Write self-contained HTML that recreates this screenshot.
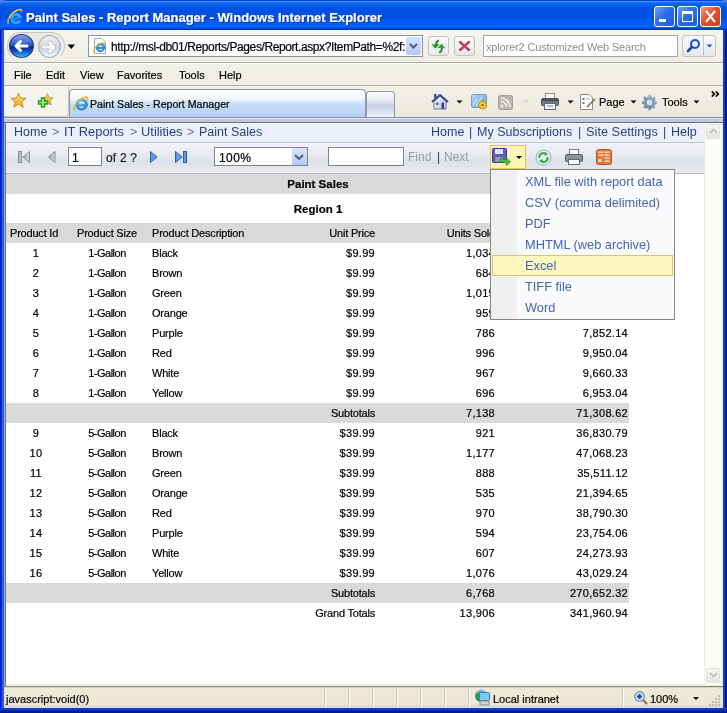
<!DOCTYPE html>
<html><head><meta charset="utf-8">
<style>
*{box-sizing:border-box}
html,body{margin:0;padding:0}
body{width:727px;height:713px;overflow:hidden;position:relative;background:#4a78e0;font-family:"Liberation Sans",sans-serif;font-size:11px;color:#000}
.a{position:absolute}
.t{position:absolute;white-space:nowrap;line-height:1;will-change:transform;-webkit-text-stroke:0.2px currentColor}
#title{left:0;top:0;width:727px;height:30px;background:linear-gradient(to bottom,#0048d0 0,#0048d0 1px,#3a8cff 1px,#3a8cff 2px,#2272f8 2px,#2272f8 3px,#0a62f0 3px,#0a62f0 5px,#0050e2 8px,#004fe4 18px,#005cf6 21px,#0062fc 26px,#0058ec 28px,#0038b8 29px,#0038b8 30px);border-radius:7px 7px 0 0}
.wb{position:absolute;top:6px;width:21px;height:21px;border:1px solid #fff;border-radius:3px;background:linear-gradient(135deg,#6f9ff5 0,#2d6de8 45%,#1f5fe0 100%)}
#client{left:4px;top:30px;width:719px;height:678px;background:#ece9d8}
</style></head>
<body>
<!-- TITLE BAR -->
<div id="title" class="a"></div>
<svg class="a" style="left:5px;top:7px" width="18" height="18" viewBox="0 0 18 18">
  <g transform="rotate(-15 11 11.5)">
  <path d="M6.6 11.3H15.4A4.4 4.2 0 1 0 14.2 14.5" stroke="#38a8f0" stroke-width="2.6" fill="none"/>
  <path d="M6.8 11.3H15" stroke="#1868c8" stroke-width="1.2"/>
  </g>
  <path d="M3.5 16.8C1.8 14 5 6.5 12 3.3C15.6 1.8 17 2.5 16.2 4.6" stroke="#e8c040" stroke-width="1.7" fill="none"/>
  <path d="M3.5 16.8C2.5 15.5 3 13 4.2 11" stroke="#c08038" stroke-width="1.2" fill="none"/>
</svg>
<div class="t" style="left:26px;top:11px;font-size:13px;font-weight:bold;color:#0a1e6a;opacity:.6;transform:translate(1px,1px)">Paint Sales - Report Manager - Windows Internet Explorer</div>
<div class="t" style="left:26px;top:11px;font-size:13px;font-weight:bold;color:#fff">Paint Sales - Report Manager - Windows Internet Explorer</div>
<div class="wb" style="left:654px"><div class="a" style="left:4px;top:12px;width:7px;height:3px;background:#fff"></div></div>
<div class="wb" style="left:677px"><div class="a" style="left:4px;top:4px;width:11px;height:11px;border:1px solid #fff;border-top-width:3px"></div></div>
<div class="wb" style="left:700px;background:linear-gradient(135deg,#f09a7a 0,#e0542e 45%,#c8401c 100%)">
  <svg class="a" style="left:4px;top:3px" width="11" height="13" viewBox="0 0 11 13"><path d="M1 1L10 12M10 1L1 12" stroke="#fff" stroke-width="2"/></svg>
</div>

<!-- CLIENT -->
<div id="client" class="a"></div>
<!-- NAV BAR -->
<div class="a" style="left:4px;top:30px;width:719px;height:32px;background:linear-gradient(to bottom,#f6f5ee,#efede3)"></div>
<div class="a" style="left:4px;top:62px;width:719px;height:2px;background:linear-gradient(#aeaea6 0,#aeaea6 1px,#fafaf8 1px)"></div>
<!-- back/forward pill -->
<div class="a" style="left:7px;top:32px;width:58px;height:28px;border-radius:14px;border:1px solid #c8c7c0;border-bottom-color:transparent;background:linear-gradient(#e9e8e2,#f3f2ec)"></div>
<div class="a" style="left:9px;top:34px;width:25px;height:24px;border-radius:50%;background:linear-gradient(#7aa0ea 0%,#4d74d4 30%,#2a4cb0 48%,#0a2c98 55%,#0c4ab8 70%,#1c90ea 90%,#48c0fa 100%);border:1px solid #1e3a8a"></div>
<svg class="a" style="left:12px;top:37px" width="18" height="18" viewBox="0 0 18 18"><path d="M8.5 4.5L4 9L8.5 13.5M4.5 9H15" stroke="#fff" stroke-width="3" fill="none" stroke-linecap="round" stroke-linejoin="round"/></svg>
<div class="a" style="left:38px;top:35px;width:23px;height:23px;border-radius:50%;background:linear-gradient(#f0f0f4 0%,#d8dae2 45%,#c8d2e0 55%,#dcecf8 85%,#eef8fe 100%);border:1px solid #9c9ca6"></div>
<svg class="a" style="left:40px;top:38px" width="18" height="18" viewBox="0 0 18 18"><path d="M9.5 4.5L14 9L9.5 13.5M13.5 9H3" stroke="#b4b4bc" stroke-width="4" fill="none" stroke-linecap="round" stroke-linejoin="round"/><path d="M9.5 4.5L14 9L9.5 13.5M13.5 9H3" stroke="#fafafa" stroke-width="2.8" fill="none" stroke-linecap="round" stroke-linejoin="round"/></svg>
<svg class="a" style="left:67px;top:44px" width="9" height="6" viewBox="0 0 9 6"><path d="M0.5 0.5H8L4.25 5z" fill="#000"/></svg>
<!-- address box -->
<div class="a" style="left:88px;top:35px;width:335px;height:22px;border:1px solid #8e9298;background:#fff"></div>
<svg class="a" style="left:92px;top:38px" width="16" height="16" viewBox="0 0 16 16">
 <path d="M2.5 0.5H10L13.5 4V15.5H2.5Z" fill="#fff" stroke="#a8a8a8"/>
 <path d="M8.5 5A4.6 4.6 0 1 0 13.1 10H11A2.6 2.6 0 0 1 6.2 11H13.1A4.6 4.6 0 0 0 8.5 5Z" fill="#2a88d8"/>
 <path d="M6.3 9A2.2 1.8 0 0 1 10.8 9Z" fill="#d8f0ff"/>
 <path d="M2.2 14.8C1 12.3 3.8 7 9 5.2C12 4.2 13 5 11.8 6.6" stroke="#e0a830" stroke-width="1.2" fill="none"/>
</svg>
<div class="t" style="left:111px;top:41px;font-size:12px;letter-spacing:-0.4px;color:#000;width:294px;height:15px;overflow:hidden">http://msl-db01/Reports/Pages/Report.aspx?ItemPath=%2f:</div>
<div class="a" style="left:406px;top:37px;width:15px;height:18px;background:linear-gradient(#d5e2fb,#b4c8f4);border-radius:2px"></div>
<svg class="a" style="left:409px;top:43px" width="9" height="6" viewBox="0 0 9 6"><path d="M1 1L4.5 4.5L8 1" stroke="#4d6185" stroke-width="2" fill="none"/></svg>
<!-- refresh / stop -->
<div class="a" style="left:428px;top:36px;width:21px;height:20px;border:1px solid #c4c3bb;border-radius:3px;background:linear-gradient(#f8f9fb,#e4e9ef)"></div>
<svg class="a" style="left:430px;top:38px" width="17" height="17" viewBox="0 0 17 17"><path d="M9 2.5C7 3 6 5 6.2 7.5" stroke="#2a8a2a" stroke-width="2.2" fill="none"/><path d="M1.5 6.5L9.5 6.2L5.5 10.5Z" fill="#2a8a2a"/><path d="M9 14.5C11 14 12 12 11.8 9.5" stroke="#3a9a3a" stroke-width="2.2" fill="none"/><path d="M7.5 10L15.5 10.3L11.5 5.8Z" fill="#3a9a3a"/></svg>
<div class="a" style="left:454px;top:36px;width:21px;height:20px;border:1px solid #c4c3bb;border-radius:3px;background:linear-gradient(#f8f9fb,#e4e9ef)"></div>
<svg class="a" style="left:458px;top:40px" width="13" height="12" viewBox="0 0 13 12"><path d="M2 2L11 10M11 2L2 10" stroke="#b8444c" stroke-width="2.4" stroke-linecap="round"/></svg>
<!-- search -->
<div class="a" style="left:483px;top:35px;width:195px;height:22px;border:1px solid #a5a5a5;background:#fff"></div>
<div class="t" style="left:486px;top:42px;font-size:11px;letter-spacing:-0.15px;color:#8d8d8d;-webkit-text-stroke:0">xplorer2 Customized Web Search</div>
<div class="a" style="left:682px;top:35px;width:34px;height:22px;border:1px solid #c4c3bb;border-radius:3px;background:linear-gradient(#f8f9fb,#e4e9ef)"></div>
<div class="a" style="left:703px;top:36px;width:1px;height:20px;background:#c9c7bb"></div>
<svg class="a" style="left:686px;top:38px" width="15" height="15" viewBox="0 0 15 15"><circle cx="9" cy="6" r="4" stroke="#1e4fb8" stroke-width="2" fill="#e8f0ff"/><path d="M6 9L2 13" stroke="#1e3f98" stroke-width="2.5" stroke-linecap="round"/></svg>
<svg class="a" style="left:706px;top:44px" width="7" height="4" viewBox="0 0 7 4"><path d="M0.5 0.5H6.5L3.5 3.5z" fill="#2a4fa8"/></svg>

<!-- MENU BAR -->
<div class="a" style="left:4px;top:64px;width:719px;height:21px;background:linear-gradient(#f2f1ea,#efede4)"></div>
<div class="a" style="left:4px;top:85px;width:719px;height:2px;background:linear-gradient(#aeaea6 0,#aeaea6 1px,#f8f8f4 1px)"></div>
<div class="t" style="left:14px;top:70px;font-size:11px">File</div>
<div class="t" style="left:46px;top:70px;font-size:11px">Edit</div>
<div class="t" style="left:80px;top:70px;font-size:11px">View</div>
<div class="t" style="left:117px;top:70px;font-size:11px">Favorites</div>
<div class="t" style="left:179px;top:70px;font-size:11px">Tools</div>
<div class="t" style="left:219px;top:70px;font-size:11px">Help</div>

<!-- COMMAND / TAB BAR -->
<div class="a" style="left:4px;top:86px;width:719px;height:32px;background:linear-gradient(#f3f1e8,#ebe8da)"></div>
<div class="a" style="left:4px;top:86px;width:65px;height:31px;background:#f4f3ee;border:1px solid #c8c6bc;border-left:none;border-top:none;border-radius:0 0 4px 0"></div>
<svg class="a" style="left:10px;top:92px" width="17" height="17" viewBox="0 0 17 17"><defs><linearGradient id="sg" x1="0" y1="0" x2="0" y2="1"><stop offset="0" stop-color="#ffe27a"/><stop offset="1" stop-color="#f0a018"/></linearGradient></defs><path d="M8.5 1L10.6 6L16 6.3L11.8 9.8L13.2 15.3L8.5 12.2L3.8 15.3L5.2 9.8L1 6.3L6.4 6Z" fill="url(#sg)" stroke="#c08a18" stroke-width="0.9"/></svg>
<svg class="a" style="left:37px;top:92px" width="17" height="17" viewBox="0 0 17 17"><path d="M10.5 1.5L12 5.5L16 5.8L13 8.5L14 13L10.5 10.5L7 13L8 8.5L5 5.8L9 5.5Z" fill="url(#sg)" stroke="#c08a18" stroke-width="0.8"/><path d="M4.5 6H7.5V9H10.5V12H7.5V15H4.5V12H1.5V9H4.5Z" fill="#a8f088" stroke="#2c9a1c" stroke-width="1.4"/></svg>
<!-- tab -->
<div class="a" style="left:69px;top:89px;width:297px;height:28px;border:1px solid #8e99a8;border-bottom:none;border-radius:4px 4px 0 0;background:linear-gradient(#ffffff 0,#f4f8fe 30%,#c6dcf8 55%,#b5cff5 100%)"></div>
<svg class="a" style="left:73px;top:96px" width="16" height="16" viewBox="0 0 16 16">
  <defs><radialGradient id="ieg" cx="0.4" cy="0.3" r="0.8"><stop offset="0" stop-color="#6cc8f8"/><stop offset="1" stop-color="#1a6cc8"/></radialGradient></defs>
  <path d="M8.5 2.5A6 6 0 1 0 14.5 9H12A3.5 3.5 0 0 1 5.5 10.5H14.5A6 6 0 0 0 8.5 2.5Z" fill="url(#ieg)"/>
  <path d="M6 7.8A2.8 2.3 0 0 1 11.8 7.8Z" fill="#d8f0ff"/>
  <path d="M1.6 15C-0.2 11.5 3.5 4.5 10.5 1.6C14.3 0.2 15.8 1.5 13.8 4.6" stroke="#e8b030" stroke-width="1.5" fill="none"/>
</svg>
<div class="t" style="left:90px;top:99px;font-size:10.6px">Paint Sales - Report Manager</div>
<div class="a" style="left:366px;top:91px;width:29px;height:26px;border:1px solid #8e99a8;border-bottom:none;border-radius:4px 4px 0 0;background:linear-gradient(#fbfbfd 0,#eceef6 30%,#c9cde2 55%,#eff0f6 100%)"></div>
<!-- command icons -->
<svg class="a" style="left:431px;top:93px" width="18" height="17" viewBox="0 0 18 17"><defs><linearGradient id="hw" x1="0" y1="0" x2="1" y2="1"><stop offset="0" stop-color="#ffffff"/><stop offset="1" stop-color="#b8c4d8"/></linearGradient></defs><rect x="3" y="1" width="2.5" height="4" fill="#3a52a8"/><path d="M3 8.5V16H15V8.5L9 3Z" fill="url(#hw)" stroke="#6a7a98"/><path d="M1 9L9 2L17 9" stroke="#3048a0" stroke-width="2" fill="none" stroke-linejoin="round"/><rect x="10.5" y="9.5" width="2.5" height="6.5" fill="#2a3f98"/><rect x="5" y="9.5" width="2.5" height="2.5" fill="#5a6a88"/></svg>
<svg class="a" style="left:456px;top:100px" width="7" height="4" viewBox="0 0 7 4"><path d="M0.5 0.5H6.5L3.5 3.5z" fill="#000"/></svg>
<svg class="a" style="left:471px;top:94px" width="17" height="16" viewBox="0 0 17 16"><defs><linearGradient id="fp" x1="0" y1="0" x2="1" y2="1"><stop offset="0" stop-color="#b8dcf8"/><stop offset="1" stop-color="#5aa0e0"/></linearGradient></defs><rect x="0.5" y="0.5" width="15" height="13" rx="1" fill="url(#fp)" stroke="#7a9cc0"/><path d="M2 11L6 5M5 12L11 3" stroke="#e8f4fc" stroke-width="1"/><circle cx="11.5" cy="11" r="4" fill="#f6d020" stroke="#b89010"/><circle cx="11.5" cy="11" r="1.2" fill="#8a6a10"/></svg>
<svg class="a" style="left:498px;top:95px" width="15" height="15" viewBox="0 0 15 15"><rect x="0.5" y="0.5" width="14" height="14" rx="2" fill="#b8b6ae" stroke="#a09e96"/><circle cx="4" cy="11" r="1.5" fill="#f2f2f0"/><path d="M3 6.5A5.5 5.5 0 0 1 8.5 12M3 3A9 9 0 0 1 12 12" stroke="#f2f2f0" stroke-width="1.6" fill="none"/></svg>
<svg class="a" style="left:523px;top:100px" width="7" height="4" viewBox="0 0 7 4"><path d="M0.5 0.5H6.5L3.5 3.5z" fill="#d6d4ca"/></svg>
<svg class="a" style="left:541px;top:93px" width="18" height="17" viewBox="0 0 18 17"><rect x="4.5" y="0.5" width="9" height="6" fill="#fff" stroke="#8a8a8a"/><rect x="0.5" y="5.5" width="17" height="7" rx="1.5" fill="#7a828e" stroke="#4a5058"/><rect x="1" y="6" width="16" height="2.5" fill="#50565e"/><rect x="3.5" y="10.5" width="11" height="6" fill="#eef4fa" stroke="#5a6a78"/><rect x="6" y="12.5" width="6" height="1" fill="#6a8aa8"/></svg>
<svg class="a" style="left:567px;top:100px" width="7" height="4" viewBox="0 0 7 4"><path d="M0.5 0.5H6.5L3.5 3.5z" fill="#000"/></svg>
<svg class="a" style="left:579px;top:94px" width="18" height="16" viewBox="0 0 18 16"><path d="M1.5 0.5H10L13.5 4V15.5H1.5Z" fill="#fff" stroke="#8a8a8a"/><rect x="3.5" y="4" width="2" height="2" fill="#5570b0"/><rect x="3.5" y="8" width="2" height="2" fill="#5570b0"/><rect x="7" y="4.5" width="4" height="1" fill="#a0a0a0"/><path d="M8 13L16 5" stroke="#7a6a40" stroke-width="1.6"/></svg>
<div class="t" style="left:599px;top:97px;font-size:11px">Page</div>
<svg class="a" style="left:630px;top:100px" width="7" height="4" viewBox="0 0 7 4"><path d="M0.5 0.5H6.5L3.5 3.5z" fill="#000"/></svg>
<svg class="a" style="left:641px;top:94px" width="17" height="17" viewBox="0 0 17 17"><defs><linearGradient id="gear" x1="0" y1="0" x2="1" y2="1"><stop offset="0" stop-color="#b0c0d8"/><stop offset="1" stop-color="#6a7ca0"/></linearGradient></defs><g fill="url(#gear)"><circle cx="8.5" cy="8.5" r="6.3"/><rect x="7.2" y="0.8" width="2.6" height="15.4" rx="0.6"/><rect x="7.2" y="0.8" width="2.6" height="15.4" rx="0.6" transform="rotate(45 8.5 8.5)"/><rect x="7.2" y="0.8" width="2.6" height="15.4" rx="0.6" transform="rotate(90 8.5 8.5)"/><rect x="7.2" y="0.8" width="2.6" height="15.4" rx="0.6" transform="rotate(135 8.5 8.5)"/></g><circle cx="8.5" cy="8.5" r="3.6" fill="#d2e0ea" stroke="#5a6c90" stroke-width="0.8"/></svg>
<div class="t" style="left:662px;top:97px;font-size:11px">Tools</div>
<svg class="a" style="left:693px;top:100px" width="7" height="4" viewBox="0 0 7 4"><path d="M0.5 0.5H6.5L3.5 3.5z" fill="#000"/></svg>
<svg class="a" style="left:711px;top:91px" width="9" height="6" viewBox="0 0 9 6"><path d="M0.8 0.5L3.3 3L0.8 5.5M4.8 0.5L7.3 3L4.8 5.5" stroke="#000" stroke-width="1.7" fill="none"/></svg>

<!-- CONTENT FRAME -->
<div class="a" style="left:4px;top:122px;width:1px;height:564px;background:#a4b0cc"></div>
<div class="a" style="left:5px;top:122px;width:1px;height:564px;background:#717569"></div>
<div class="a" style="left:6px;top:122px;width:698px;height:563px;background:#fff"></div>
<!-- scrollbar -->
<div class="a" style="left:704px;top:122px;width:1px;height:563px;background:#ececec"></div>
<div class="a" style="left:705px;top:122px;width:16px;height:563px;background:#fdfdf6"></div>
<div class="a" style="left:721px;top:122px;width:2px;height:564px;background:#e8f2fa"></div>
<div class="a" style="left:706px;top:124px;width:14px;height:15px;border-radius:2px;background:linear-gradient(#f6f6f2,#e6e6e0);border:1px solid #e2e2dc"></div>
<svg class="a" style="left:709px;top:128px" width="9" height="6" viewBox="0 0 9 6"><path d="M1 5L4.5 1.5L8 5" stroke="#c6c6c0" stroke-width="2" fill="none"/></svg>
<div class="a" style="left:706px;top:668px;width:14px;height:15px;border-radius:2px;background:linear-gradient(#f6f6f2,#e6e6e0);border:1px solid #e2e2dc"></div>
<svg class="a" style="left:709px;top:672px" width="9" height="6" viewBox="0 0 9 6"><path d="M1 1L4.5 4.5L8 1" stroke="#c6c6c0" stroke-width="2" fill="none"/></svg>

<!-- breadcrumb -->
<div class="a" style="left:6px;top:122px;width:698px;height:20px;background:linear-gradient(#f2f8f2 0,#f2f8f2 2px,#ebf0fb 2px)"></div>
<div class="a" style="left:6px;top:142px;width:698px;height:1px;background:#c6c9d2"></div>
<div class="t" style="left:14px;top:126px;font-size:12.5px;color:#2b3f80;-webkit-text-stroke:0">Home</div>
<div class="t" style="left:52px;top:126px;font-size:12.5px;color:#6a7090;-webkit-text-stroke:0">&gt;</div>
<div class="t" style="left:64px;top:126px;font-size:12.9px;color:#2b3f80;-webkit-text-stroke:0">IT Reports</div>
<div class="t" style="left:130px;top:126px;font-size:12.5px;color:#6a7090;-webkit-text-stroke:0">&gt;</div>
<div class="t" style="left:141px;top:126px;font-size:12.9px;color:#2b3f80;-webkit-text-stroke:0">Utilities</div>
<div class="t" style="left:187px;top:126px;font-size:12.5px;color:#6a7090;-webkit-text-stroke:0">&gt;</div>
<div class="t" style="left:199px;top:126px;font-size:12.5px;color:#2b3f80;-webkit-text-stroke:0">Paint Sales</div>
<div class="t" style="left:431px;top:126px;font-size:12.5px;color:#2b3f80;-webkit-text-stroke:0">Home</div>
<div class="t" style="left:469px;top:126px;font-size:12.5px;color:#2b3f80;-webkit-text-stroke:0">|</div>
<div class="t" style="left:477px;top:126px;font-size:12.5px;color:#2b3f80;-webkit-text-stroke:0">My Subscriptions</div>
<div class="t" style="left:578px;top:126px;font-size:12.5px;color:#2b3f80;-webkit-text-stroke:0">|</div>
<div class="t" style="left:586px;top:126px;font-size:12.8px;color:#2b3f80;-webkit-text-stroke:0">Site Settings</div>
<div class="t" style="left:663px;top:126px;font-size:12.5px;color:#2b3f80;-webkit-text-stroke:0">|</div>
<div class="t" style="left:671px;top:126px;font-size:12.5px;color:#2b3f80;-webkit-text-stroke:0">Help</div>



<!-- report toolbar -->
<div class="a" style="left:6px;top:143px;width:698px;height:30px;background:linear-gradient(#f1f2f7 0,#e8eaf0 40%,#dde0e8 60%,#e9ebf1 100%)"></div>
<div class="a" style="left:6px;top:173px;width:698px;height:1px;background:#b9bcc6"></div>
<svg class="a" style="left:17px;top:151px" width="14" height="12" viewBox="0 0 14 12"><defs><linearGradient id="gg" x1="0" y1="0" x2="1" y2="0"><stop offset="0" stop-color="#9ea2aa"/><stop offset="1" stop-color="#d8dae0"/></linearGradient></defs><rect x="1.5" y="0.5" width="3" height="11" fill="url(#gg)" stroke="#8a8e98"/><path d="M12.5 0.5V11.5L6 6Z" fill="url(#gg)" stroke="#8a8e98"/></svg>
<svg class="a" style="left:48px;top:151px" width="8" height="12" viewBox="0 0 8 12"><path d="M7 0.5V11.5L0.5 6Z" fill="url(#gg)" stroke="#8a8e98"/></svg>
<div class="a" style="left:68px;top:147px;width:34px;height:19px;border:1px solid #7b8595;background:#fff"></div>
<div class="t" style="left:72px;top:152px;font-size:12px">1</div>
<div class="t" style="left:106px;top:152px;font-size:12px;letter-spacing:0.2px;color:#1a1a1a">of 2 ?</div>
<svg class="a" style="left:150px;top:151px" width="8" height="12" viewBox="0 0 8 12"><path d="M0.5 0.5V11.5L7 6Z" fill="#5b9de8" stroke="#2d5fb0"/></svg>
<svg class="a" style="left:175px;top:151px" width="13" height="12" viewBox="0 0 13 12"><path d="M0.5 0.5V11.5L7 6Z" fill="#5b9de8" stroke="#2d5fb0"/><rect x="8.5" y="0.5" width="3" height="11" fill="#5b9de8" stroke="#2d5fb0"/></svg>
<div class="a" style="left:214px;top:147px;width:94px;height:19px;border:1px solid #7b8595;background:#fff"></div>
<div class="t" style="left:219px;top:152px;font-size:12px;letter-spacing:0.4px">100%</div>
<div class="a" style="left:291px;top:148px;width:16px;height:17px;background:linear-gradient(#dbe5fa,#b9cbf2);border-left:1px solid #fff"></div>
<svg class="a" style="left:294px;top:154px" width="10" height="6" viewBox="0 0 10 6"><path d="M1 1L5 5L9 1" stroke="#4d6185" stroke-width="2" fill="none"/></svg>
<div class="a" style="left:328px;top:147px;width:76px;height:19px;border:1px solid #7b8595;background:#fff"></div>
<div class="t" style="left:408px;top:151px;font-size:12px;color:#9a9ca4;-webkit-text-stroke:0">Find</div>
<div class="t" style="left:437px;top:151px;font-size:12px;color:#243b78;-webkit-text-stroke:0">|</div>
<div class="t" style="left:444px;top:151px;font-size:12px;color:#9a9ca4;-webkit-text-stroke:0">Next</div>
<!-- export button (hover) -->
<div class="a" style="left:490px;top:145px;width:36px;height:24px;border:1px solid #e6c54a;background:#fdf5b6"></div>
<svg class="a" style="left:492px;top:148px" width="19" height="18" viewBox="0 0 19 18"><rect x="0.5" y="0.5" width="14" height="14" rx="1" fill="#6060b8" stroke="#383880"/><rect x="3" y="1" width="8" height="5" fill="#dfe2f2"/><rect x="3.5" y="9" width="7" height="5" fill="#9a9ab8"/><path d="M8 11C10 11 13 11 14.5 12.5V10L18.5 14L14.5 17.5V15C12.5 14 10 14 8 14Z" fill="#50c040" stroke="#2a8a2a" stroke-width="0.8"/></svg>
<svg class="a" style="left:516px;top:156px" width="6" height="3" viewBox="0 0 6 3"><path d="M0 0H6L3 3z" fill="#000"/></svg>
<svg class="a" style="left:535px;top:149px" width="17" height="17" viewBox="0 0 17 17"><circle cx="8.5" cy="8.5" r="7.5" fill="#e6f0fa" stroke="#8ab0d8"/><path d="M4.5 9A4 4 0 0 1 11 5" stroke="#3fa83f" stroke-width="2" fill="none"/><path d="M12.5 8A4 4 0 0 1 6 12" stroke="#3fa83f" stroke-width="2" fill="none"/><path d="M10 3L13 5.5L9.5 7z" fill="#3fa83f"/><path d="M7 14L4 11.5L7.5 10z" fill="#3fa83f"/></svg>
<svg class="a" style="left:565px;top:149px" width="18" height="16" viewBox="0 0 18 16"><rect x="4.5" y="0.5" width="9" height="6" fill="#fff" stroke="#7a7a7a"/><rect x="0.5" y="5.5" width="17" height="7" rx="1.5" fill="#8a949e" stroke="#565e68"/><rect x="3.5" y="10.5" width="11" height="5" fill="#fff" stroke="#6a6a6a"/></svg>
<svg class="a" style="left:596px;top:149px" width="16" height="16" viewBox="0 0 16 16"><rect x="0.5" y="0.5" width="15" height="15" rx="2" fill="#e87838" stroke="#b85420"/><rect x="2.5" y="2.5" width="5" height="1.3" fill="#fde8d8"/><rect x="8.5" y="2.5" width="5" height="1.3" fill="#fde8d8"/><rect x="2.5" y="5.5" width="5" height="1.3" fill="#fde8d8"/><rect x="8.5" y="5.5" width="5" height="1.3" fill="#fde8d8"/><rect x="8.5" y="8.5" width="5" height="1.3" fill="#fde8d8"/><rect x="8.5" y="11.5" width="5" height="1.3" fill="#fde8d8"/><rect x="2.5" y="10" width="3" height="3" fill="#fde8d8"/></svg>


<!-- REPORT TABLE -->
<div class="a" id="rep" style="left:0;top:0;font-size:11px;color:#000">
<div class="a" style="left:6px;top:174px;width:623px;height:20px;background:#d9d9d9"></div>
<div class="t" style="left:218px;width:200px;text-align:center;top:179px;letter-spacing:-0.2px;font-weight:bold;font-size:11.5px;letter-spacing:0">Paint Sales</div>
<div class="t" style="left:218px;width:200px;text-align:center;top:204px;letter-spacing:-0.2px;font-weight:bold;font-size:11.5px;letter-spacing:0">Region 1</div>
<div class="a" style="left:6px;top:223px;width:623px;height:20px;background:#d9d9d9"></div>
<div class="t" style="left:10px;top:228px;letter-spacing:-0.2px;">Product Id</div>
<div class="t" style="left:77px;top:228px;letter-spacing:-0.2px;">Product Size</div>
<div class="t" style="left:152px;top:228px;letter-spacing:-0.2px;">Product Description</div>
<div class="t" style="left:174.8px;width:200px;text-align:right;top:228px;letter-spacing:-0.2px;">Unit Price</div>
<div class="t" style="left:294.8px;width:200px;text-align:right;top:228px;letter-spacing:-0.2px;">Units Sold</div>
<div class="t" style="left:427.8px;width:200px;text-align:right;top:228px;letter-spacing:-0.2px;">Total</div>
<div class="t" style="left:-64px;width:200px;text-align:center;top:248px;letter-spacing:0.3px;">1</div>
<div class="t" style="left:7px;width:200px;text-align:center;top:248px;letter-spacing:-0.5px;">1-Gallon</div>
<div class="t" style="left:152px;top:248px;letter-spacing:-0.2px;">Black</div>
<div class="t" style="left:175.3px;width:200px;text-align:right;top:248px;letter-spacing:0.3px;">$9.99</div>
<div class="t" style="left:295.3px;width:200px;text-align:right;top:248px;letter-spacing:0.3px;">1,034</div>
<div class="t" style="left:428.3px;width:200px;text-align:right;top:248px;letter-spacing:0.3px;">10,329.66</div>
<div class="t" style="left:-64px;width:200px;text-align:center;top:268px;letter-spacing:0.3px;">2</div>
<div class="t" style="left:7px;width:200px;text-align:center;top:268px;letter-spacing:-0.5px;">1-Gallon</div>
<div class="t" style="left:152px;top:268px;letter-spacing:-0.2px;">Brown</div>
<div class="t" style="left:175.3px;width:200px;text-align:right;top:268px;letter-spacing:0.3px;">$9.99</div>
<div class="t" style="left:295.3px;width:200px;text-align:right;top:268px;letter-spacing:0.3px;">684</div>
<div class="t" style="left:428.3px;width:200px;text-align:right;top:268px;letter-spacing:0.3px;">6,833.16</div>
<div class="t" style="left:-64px;width:200px;text-align:center;top:288px;letter-spacing:0.3px;">3</div>
<div class="t" style="left:7px;width:200px;text-align:center;top:288px;letter-spacing:-0.5px;">1-Gallon</div>
<div class="t" style="left:152px;top:288px;letter-spacing:-0.2px;">Green</div>
<div class="t" style="left:175.3px;width:200px;text-align:right;top:288px;letter-spacing:0.3px;">$9.99</div>
<div class="t" style="left:295.3px;width:200px;text-align:right;top:288px;letter-spacing:0.3px;">1,019</div>
<div class="t" style="left:428.3px;width:200px;text-align:right;top:288px;letter-spacing:0.3px;">10,179.81</div>
<div class="t" style="left:-64px;width:200px;text-align:center;top:308px;letter-spacing:0.3px;">4</div>
<div class="t" style="left:7px;width:200px;text-align:center;top:308px;letter-spacing:-0.5px;">1-Gallon</div>
<div class="t" style="left:152px;top:308px;letter-spacing:-0.2px;">Orange</div>
<div class="t" style="left:175.3px;width:200px;text-align:right;top:308px;letter-spacing:0.3px;">$9.99</div>
<div class="t" style="left:295.3px;width:200px;text-align:right;top:308px;letter-spacing:0.3px;">959</div>
<div class="t" style="left:428.3px;width:200px;text-align:right;top:308px;letter-spacing:0.3px;">9,580.41</div>
<div class="t" style="left:-64px;width:200px;text-align:center;top:328px;letter-spacing:0.3px;">5</div>
<div class="t" style="left:7px;width:200px;text-align:center;top:328px;letter-spacing:-0.5px;">1-Gallon</div>
<div class="t" style="left:152px;top:328px;letter-spacing:-0.2px;">Purple</div>
<div class="t" style="left:175.3px;width:200px;text-align:right;top:328px;letter-spacing:0.3px;">$9.99</div>
<div class="t" style="left:295.3px;width:200px;text-align:right;top:328px;letter-spacing:0.3px;">786</div>
<div class="t" style="left:428.3px;width:200px;text-align:right;top:328px;letter-spacing:0.3px;">7,852.14</div>
<div class="t" style="left:-64px;width:200px;text-align:center;top:348px;letter-spacing:0.3px;">6</div>
<div class="t" style="left:7px;width:200px;text-align:center;top:348px;letter-spacing:-0.5px;">1-Gallon</div>
<div class="t" style="left:152px;top:348px;letter-spacing:-0.2px;">Red</div>
<div class="t" style="left:175.3px;width:200px;text-align:right;top:348px;letter-spacing:0.3px;">$9.99</div>
<div class="t" style="left:295.3px;width:200px;text-align:right;top:348px;letter-spacing:0.3px;">996</div>
<div class="t" style="left:428.3px;width:200px;text-align:right;top:348px;letter-spacing:0.3px;">9,950.04</div>
<div class="t" style="left:-64px;width:200px;text-align:center;top:368px;letter-spacing:0.3px;">7</div>
<div class="t" style="left:7px;width:200px;text-align:center;top:368px;letter-spacing:-0.5px;">1-Gallon</div>
<div class="t" style="left:152px;top:368px;letter-spacing:-0.2px;">White</div>
<div class="t" style="left:175.3px;width:200px;text-align:right;top:368px;letter-spacing:0.3px;">$9.99</div>
<div class="t" style="left:295.3px;width:200px;text-align:right;top:368px;letter-spacing:0.3px;">967</div>
<div class="t" style="left:428.3px;width:200px;text-align:right;top:368px;letter-spacing:0.3px;">9,660.33</div>
<div class="t" style="left:-64px;width:200px;text-align:center;top:388px;letter-spacing:0.3px;">8</div>
<div class="t" style="left:7px;width:200px;text-align:center;top:388px;letter-spacing:-0.5px;">1-Gallon</div>
<div class="t" style="left:152px;top:388px;letter-spacing:-0.2px;">Yellow</div>
<div class="t" style="left:175.3px;width:200px;text-align:right;top:388px;letter-spacing:0.3px;">$9.99</div>
<div class="t" style="left:295.3px;width:200px;text-align:right;top:388px;letter-spacing:0.3px;">696</div>
<div class="t" style="left:428.3px;width:200px;text-align:right;top:388px;letter-spacing:0.3px;">6,953.04</div>
<div class="a" style="left:6px;top:403px;width:623px;height:20px;background:#d9d9d9"></div>
<div class="t" style="left:174.8px;width:200px;text-align:right;top:408px;letter-spacing:-0.2px;">Subtotals</div>
<div class="t" style="left:295.3px;width:200px;text-align:right;top:408px;letter-spacing:0.3px;">7,138</div>
<div class="t" style="left:428.3px;width:200px;text-align:right;top:408px;letter-spacing:0.3px;">71,308.62</div>
<div class="t" style="left:-64px;width:200px;text-align:center;top:428px;letter-spacing:0.3px;">9</div>
<div class="t" style="left:7px;width:200px;text-align:center;top:428px;letter-spacing:-0.5px;">5-Gallon</div>
<div class="t" style="left:152px;top:428px;letter-spacing:-0.2px;">Black</div>
<div class="t" style="left:175.3px;width:200px;text-align:right;top:428px;letter-spacing:0.3px;">$39.99</div>
<div class="t" style="left:295.3px;width:200px;text-align:right;top:428px;letter-spacing:0.3px;">921</div>
<div class="t" style="left:428.3px;width:200px;text-align:right;top:428px;letter-spacing:0.3px;">36,830.79</div>
<div class="t" style="left:-64px;width:200px;text-align:center;top:448px;letter-spacing:0.3px;">10</div>
<div class="t" style="left:7px;width:200px;text-align:center;top:448px;letter-spacing:-0.5px;">5-Gallon</div>
<div class="t" style="left:152px;top:448px;letter-spacing:-0.2px;">Brown</div>
<div class="t" style="left:175.3px;width:200px;text-align:right;top:448px;letter-spacing:0.3px;">$39.99</div>
<div class="t" style="left:295.3px;width:200px;text-align:right;top:448px;letter-spacing:0.3px;">1,177</div>
<div class="t" style="left:428.3px;width:200px;text-align:right;top:448px;letter-spacing:0.3px;">47,068.23</div>
<div class="t" style="left:-64px;width:200px;text-align:center;top:468px;letter-spacing:0.3px;">11</div>
<div class="t" style="left:7px;width:200px;text-align:center;top:468px;letter-spacing:-0.5px;">5-Gallon</div>
<div class="t" style="left:152px;top:468px;letter-spacing:-0.2px;">Green</div>
<div class="t" style="left:175.3px;width:200px;text-align:right;top:468px;letter-spacing:0.3px;">$39.99</div>
<div class="t" style="left:295.3px;width:200px;text-align:right;top:468px;letter-spacing:0.3px;">888</div>
<div class="t" style="left:428.3px;width:200px;text-align:right;top:468px;letter-spacing:0.3px;">35,511.12</div>
<div class="t" style="left:-64px;width:200px;text-align:center;top:488px;letter-spacing:0.3px;">12</div>
<div class="t" style="left:7px;width:200px;text-align:center;top:488px;letter-spacing:-0.5px;">5-Gallon</div>
<div class="t" style="left:152px;top:488px;letter-spacing:-0.2px;">Orange</div>
<div class="t" style="left:175.3px;width:200px;text-align:right;top:488px;letter-spacing:0.3px;">$39.99</div>
<div class="t" style="left:295.3px;width:200px;text-align:right;top:488px;letter-spacing:0.3px;">535</div>
<div class="t" style="left:428.3px;width:200px;text-align:right;top:488px;letter-spacing:0.3px;">21,394.65</div>
<div class="t" style="left:-64px;width:200px;text-align:center;top:508px;letter-spacing:0.3px;">13</div>
<div class="t" style="left:7px;width:200px;text-align:center;top:508px;letter-spacing:-0.5px;">5-Gallon</div>
<div class="t" style="left:152px;top:508px;letter-spacing:-0.2px;">Red</div>
<div class="t" style="left:175.3px;width:200px;text-align:right;top:508px;letter-spacing:0.3px;">$39.99</div>
<div class="t" style="left:295.3px;width:200px;text-align:right;top:508px;letter-spacing:0.3px;">970</div>
<div class="t" style="left:428.3px;width:200px;text-align:right;top:508px;letter-spacing:0.3px;">38,790.30</div>
<div class="t" style="left:-64px;width:200px;text-align:center;top:528px;letter-spacing:0.3px;">14</div>
<div class="t" style="left:7px;width:200px;text-align:center;top:528px;letter-spacing:-0.5px;">5-Gallon</div>
<div class="t" style="left:152px;top:528px;letter-spacing:-0.2px;">Purple</div>
<div class="t" style="left:175.3px;width:200px;text-align:right;top:528px;letter-spacing:0.3px;">$39.99</div>
<div class="t" style="left:295.3px;width:200px;text-align:right;top:528px;letter-spacing:0.3px;">594</div>
<div class="t" style="left:428.3px;width:200px;text-align:right;top:528px;letter-spacing:0.3px;">23,754.06</div>
<div class="t" style="left:-64px;width:200px;text-align:center;top:548px;letter-spacing:0.3px;">15</div>
<div class="t" style="left:7px;width:200px;text-align:center;top:548px;letter-spacing:-0.5px;">5-Gallon</div>
<div class="t" style="left:152px;top:548px;letter-spacing:-0.2px;">White</div>
<div class="t" style="left:175.3px;width:200px;text-align:right;top:548px;letter-spacing:0.3px;">$39.99</div>
<div class="t" style="left:295.3px;width:200px;text-align:right;top:548px;letter-spacing:0.3px;">607</div>
<div class="t" style="left:428.3px;width:200px;text-align:right;top:548px;letter-spacing:0.3px;">24,273.93</div>
<div class="t" style="left:-64px;width:200px;text-align:center;top:568px;letter-spacing:0.3px;">16</div>
<div class="t" style="left:7px;width:200px;text-align:center;top:568px;letter-spacing:-0.5px;">5-Gallon</div>
<div class="t" style="left:152px;top:568px;letter-spacing:-0.2px;">Yellow</div>
<div class="t" style="left:175.3px;width:200px;text-align:right;top:568px;letter-spacing:0.3px;">$39.99</div>
<div class="t" style="left:295.3px;width:200px;text-align:right;top:568px;letter-spacing:0.3px;">1,076</div>
<div class="t" style="left:428.3px;width:200px;text-align:right;top:568px;letter-spacing:0.3px;">43,029.24</div>
<div class="a" style="left:6px;top:583px;width:623px;height:20px;background:#d9d9d9"></div>
<div class="t" style="left:174.8px;width:200px;text-align:right;top:588px;letter-spacing:-0.2px;">Subtotals</div>
<div class="t" style="left:295.3px;width:200px;text-align:right;top:588px;letter-spacing:0.3px;">6,768</div>
<div class="t" style="left:428.3px;width:200px;text-align:right;top:588px;letter-spacing:0.3px;">270,652.32</div>
<div class="t" style="left:174.8px;width:200px;text-align:right;top:608px;letter-spacing:-0.2px;">Grand Totals</div>
<div class="t" style="left:295.3px;width:200px;text-align:right;top:608px;letter-spacing:0.3px;">13,906</div>
<div class="t" style="left:428.3px;width:200px;text-align:right;top:608px;letter-spacing:0.3px;">341,960.94</div>
</div>
<!-- EXPORT MENU -->
<div class="a" style="left:490px;top:169px;width:185px;height:151px;border:1px solid #868686;background:#fafafc"></div>
<div class="a" style="left:491px;top:170px;width:26px;height:149px;background:#efeff1"></div>
<div class="a" style="left:492px;top:255px;width:181px;height:21px;border:1px solid #e5c365;background:#fdf7bd"></div>
<div class="t" style="left:525px;top:176px;font-size:12.8px;color:#4565b0;-webkit-text-stroke:0">XML file with report data</div>
<div class="t" style="left:525px;top:197px;font-size:12.8px;color:#4565b0;-webkit-text-stroke:0">CSV (comma delimited)</div>
<div class="t" style="left:525px;top:218px;font-size:12.8px;color:#4565b0;-webkit-text-stroke:0">PDF</div>
<div class="t" style="left:525px;top:239px;font-size:12.8px;color:#4565b0;-webkit-text-stroke:0">MHTML (web archive)</div>
<div class="t" style="left:525px;top:260px;font-size:12.8px;color:#4565b0;-webkit-text-stroke:0">Excel</div>
<div class="t" style="left:525px;top:281px;font-size:12.8px;color:#4565b0;-webkit-text-stroke:0">TIFF file</div>
<div class="t" style="left:525px;top:302px;font-size:12.8px;color:#4565b0;-webkit-text-stroke:0">Word</div>

<!-- STATUS BAR -->
<div class="a" style="left:6px;top:684px;width:698px;height:1px;background:#ececea"></div>
<div class="a" style="left:4px;top:686px;width:719px;height:22px;background:linear-gradient(#8a8c80 0,#8a8c80 1px,#d4d0bc 1px,#d4d0bc 2px,#efe9d8 2px,#ece7d5 19px,#dedcc6 19px,#dedcc6 21px,#d0e0f8 21px)"></div>
<div class="t" style="left:6px;top:694px;font-size:11px">javascript:void(0)</div>
<div class="a" style="left:324px;top:689px;width:2px;height:18px;border-left:1px solid #cac7b8;border-right:1px solid #fff"></div>
<div class="a" style="left:348px;top:689px;width:2px;height:18px;border-left:1px solid #cac7b8;border-right:1px solid #fff"></div>
<div class="a" style="left:372px;top:689px;width:2px;height:18px;border-left:1px solid #cac7b8;border-right:1px solid #fff"></div>
<div class="a" style="left:396px;top:689px;width:2px;height:18px;border-left:1px solid #cac7b8;border-right:1px solid #fff"></div>
<div class="a" style="left:420px;top:689px;width:2px;height:18px;border-left:1px solid #cac7b8;border-right:1px solid #fff"></div>
<div class="a" style="left:444px;top:689px;width:2px;height:18px;border-left:1px solid #cac7b8;border-right:1px solid #fff"></div>
<div class="a" style="left:468px;top:689px;width:2px;height:18px;border-left:1px solid #cac7b8;border-right:1px solid #fff"></div>

<div class="a" style="left:622px;top:689px;width:2px;height:18px;border-left:1px solid #cac7b8;border-right:1px solid #fff"></div>
<svg class="a" style="left:474px;top:689px" width="17" height="17" viewBox="0 0 17 17"><circle cx="7" cy="7" r="6" fill="#2a9a4a"/><path d="M3 4A5 5 0 0 1 11 3" stroke="#6ac0f0" stroke-width="2" fill="none"/><rect x="5.5" y="3.5" width="10" height="8" rx="1" fill="#7ec8f4" stroke="#3a7ab0"/><rect x="6" y="12" width="9" height="4" fill="#d0d4dc" stroke="#8a8e98"/></svg>
<div class="t" style="left:493px;top:694px;font-size:11px">Local intranet</div>
<svg class="a" style="left:634px;top:691px" width="14" height="14" viewBox="0 0 14 14"><circle cx="5.5" cy="5.5" r="4.8" fill="#cfe3f8" stroke="#3a74c0"/><path d="M3 5.5H8M5.5 3V8" stroke="#1a4fb0" stroke-width="2"/><path d="M9 9L13 13" stroke="#8a6a3a" stroke-width="2.2"/></svg>
<div class="t" style="left:650px;top:694px;font-size:11px">100%</div>
<svg class="a" style="left:693px;top:697px" width="6" height="3" viewBox="0 0 6 3"><path d="M0 0H6L3 3z" fill="#000"/></svg>
<svg class="a" style="left:709px;top:694px" width="12" height="12" viewBox="0 0 12 12"><g fill="#c0bdae"><rect x="9" y="1" width="2" height="2"/><rect x="6" y="4" width="2" height="2"/><rect x="9" y="4" width="2" height="2"/><rect x="3" y="7" width="2" height="2"/><rect x="6" y="7" width="2" height="2"/><rect x="9" y="7" width="2" height="2"/><rect x="0" y="10" width="2" height="2"/><rect x="3" y="10" width="2" height="2"/><rect x="6" y="10" width="2" height="2"/><rect x="9" y="10" width="2" height="2"/></g></svg>

<!-- tab band -->
<div class="a" style="left:4px;top:117px;width:719px;height:6px;background:linear-gradient(#8a8e96 0,#8a8e96 1px,#e4e6f6 1px,#e4e6f6 2px,#c2c6e0 2px,#c2c6e0 5px,#6a7078 5px)"></div>


<!-- WINDOW BORDERS -->
<div class="a" style="left:0;top:30px;width:4px;height:683px;background:linear-gradient(to right,#0018c4 0,#0018c4 1px,#0630d8 1px,#0630d8 2px,#2262fa 2px,#2262fa 3px,#2a58c8 3px)"></div>
<div class="a" style="left:723px;top:30px;width:4px;height:683px;background:linear-gradient(to right,#1a3cb0 0,#1a3cb0 1px,#1038c0 1px,#1038c0 2px,#001ca0 2px,#001ca0 3px,#001890 3px)"></div>
<div class="a" style="left:0;top:708px;width:727px;height:5px;background:linear-gradient(#1a40b0 0,#1a40b0 1px,#1038c0 1px,#1038c0 2px,#0a28b0 2px,#0a28b0 3px,#001ca0 3px,#001ca0 4px,#001890 4px)"></div>
</body></html>
